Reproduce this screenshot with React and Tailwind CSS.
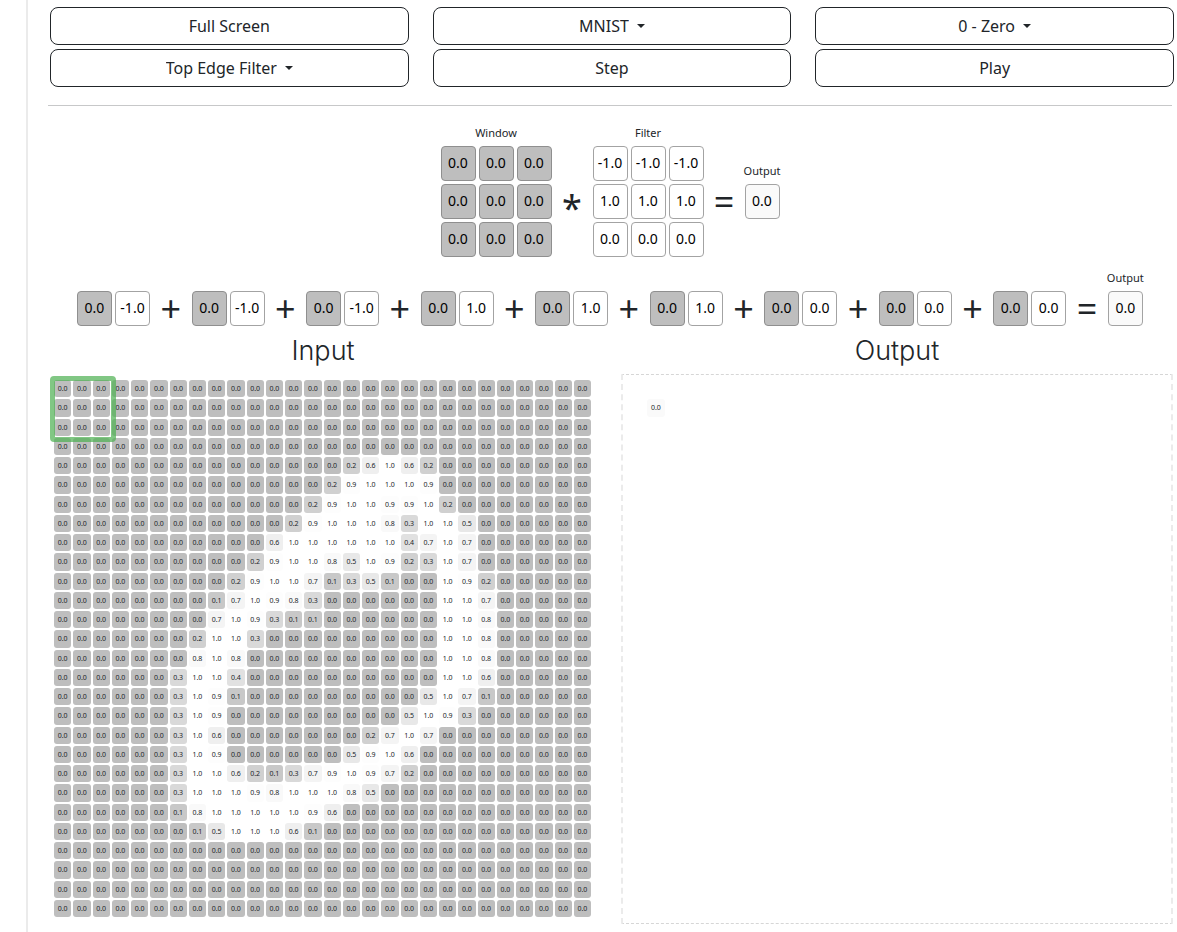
import { useState } from "react";

const SIZE = 28;

// one entry per image row: [first column, pixel values in tenths, X = 1.0]
const ZERO_DIGIT = [
    [0, ""],
    [0, ""],
    [0, ""],
    [0, ""],
    [15, "26X62"],
    [14, "29XXX9"],
    [13, "29XX99X2"],
    [12, "29XXX83XX5"],
    [11, "6XXXXXX47X7"],
    [10, "29XX85X923X7"],
    [9, "29XX7135100X92"],
    [8, "17X983000000XX7"],
    [8, "7X9311000000XX8"],
    [7, "2XX3000000000XX8"],
    [7, "8X80000000000XX8"],
    [6, "3XX40000000000XX6"],
    [6, "3X910000000005X71"],
    [6, "3X90000000005X93"],
    [6, "3X6000000027X7"],
    [6, "3X900000059X6"],
    [6, "3XX621379X972"],
    [6, "3XXX98XXX85"],
    [6, "18XXXXX96"],
    [7, "15XXX61"],
    [0, ""],
    [0, ""],
    [0, ""],
    [0, ""],
];

const pixels = ZERO_DIGIT.flatMap(([start, values]) =>
    ("0".repeat(start) + values)
        .padEnd(SIZE, "0")
        .split("")
        .map((c) => (c === "X" ? 1 : Number(c) / 10))
);

const windowValues = [0, 0, 0, 0, 0, 0, 0, 0, 0];
const filterValues = [-1, -1, -1, 1, 1, 1, 0, 0, 0];

function shade(value){
    const level = Math.round(255 - 65 * Math.pow(1 - value, 1.5));
    return `rgb(${level}, ${level}, ${level})`;
}

function Dropdown({ label, options }){
    const [value, setValue] = useState(options[0]);

    return(
        <label className="h-[38px] flex justify-center items-center gap-2 border border-[#212529] rounded-lg cursor-pointer hover:bg-gray-100">
            <select aria-label={label} value={value} onChange={
                (e)=>{
                    setValue(e.target.value)
                }
            } className="appearance-none field-sizing-content outline-none cursor-pointer">
                {options.map((option) => (
                    <option key={option}>{option}</option>
                ))}
            </select>
            <span className="border-x-4 border-t-4 border-x-transparent border-t-[#212529]"></span>
        </label>
    )
}

function ActionButton({ children }){
    return(
        <button className="h-[38px] border border-[#212529] rounded-lg cursor-pointer hover:bg-gray-100">{children}</button>
    )
}

function Cell({ value, className }){
    return(
        <div className={"w-[35px] h-[35px] pb-[2px] flex justify-center items-center border rounded text-sm text-black " + className}>
            {value.toFixed(1)}
        </div>
    )
}

function Labelled({ label, children }){
    return(
        <div className="flex flex-col items-center">
            <div className="text-[11px] leading-4 mb-[5px]">{label}</div>
            {children}
        </div>
    )
}

function OutputCell(){
    return(
        <div className="w-[35px] flex justify-center">
            <Labelled label="Output">
                <Cell value={0} className="bg-[#fafafa] border-[#a3a3a3]" />
            </Labelled>
        </div>
    )
}

function Operator({ children }){
    return(
        <div className="w-[21px] h-[35px] text-4xl leading-[35px] text-center">{children}</div>
    )
}

function Pixel({ value, color, className }){
    return(
        <div style={{ backgroundColor: color }} className={"min-w-0 min-h-0 flex justify-center items-center rounded-[3px] text-[7px] leading-none text-[#212529] " + (className || "")}>
            {value.toFixed(1)}
        </div>
    )
}

export default function App(){
    return(
        <div className="min-h-screen bg-white pl-[26px] flex font-['Noto_Sans',sans-serif] text-[#212529]">
            <main className="flex-1 min-w-0 border-l-2 border-[#ebebeb] pl-5 pr-[5px] pt-[7px] pb-1">

                <div className="grid grid-cols-3 gap-x-6 gap-y-1 ml-[2px] -mr-[2px]">
                    <ActionButton>Full Screen</ActionButton>
                    <Dropdown label="Dataset" options={["MNIST", "Fashion MNIST"]} />
                    <Dropdown label="Image" options={["0 - Zero", "1 - One", "2 - Two", "3 - Three"]} />
                    <Dropdown label="Filter" options={["Top Edge Filter", "Bottom Edge Filter", "Left Edge Filter", "Right Edge Filter"]} />
                    <ActionButton>Step</ActionButton>
                    <ActionButton>Play</ActionButton>
                </div>

                <hr className="mt-[18px] border-[#c7c8c9]" />

                <div className="mt-[19px] flex justify-center items-center gap-[10px]">
                    <Labelled label="Window">
                        <div className="grid grid-cols-3 gap-[3px]">
                            {windowValues.map((v, i) => (
                                <Cell key={i} value={v} className="bg-[#bebebe] border-[#8f8f8f]" />
                            ))}
                        </div>
                    </Labelled>
                    {/* the glyph sits high on its line, so it gets more room above */}
                    <div className="pt-8"><Operator>*</Operator></div>
                    <Labelled label="Filter">
                        <div className="grid grid-cols-3 gap-[3px]">
                            {filterValues.map((v, i) => (
                                <Cell key={i} value={v} className="bg-white border-[#a3a3a3]" />
                            ))}
                        </div>
                    </Labelled>
                    <div className="pt-[21px]"><Operator>=</Operator></div>
                    <OutputCell />
                </div>

                <div className="mt-[13px] px-[29px] flex justify-between items-end">
                    {windowValues.map((v, i) => [
                        <div key={"pair" + i} className="flex gap-[3px]">
                            <Cell value={v} className="bg-[#bebebe] border-[#8f8f8f]" />
                            <Cell value={filterValues[i]} className="bg-white border-[#a3a3a3]" />
                        </div>,
                        <Operator key={"op" + i}>{i < 8 ? "+" : "="}</Operator>
                    ])}
                    <OutputCell />
                </div>

                <div className="mt-[10px] grid grid-cols-2 gap-6">
                    <section>
                        <h2 className="mb-2 text-center font-['Inter',sans-serif] font-light text-[27px] leading-[30px]">Input</h2>
                        <div className="relative pl-[6px] pt-[6px] pr-[7px] pb-[7px]">
                            <div className="aspect-square grid grid-cols-[repeat(28,minmax(0,1fr))] grid-rows-[repeat(28,minmax(0,1fr))] gap-[2px]">
                                {pixels.map((v, i) => (
                                    <Pixel key={i} value={v} color={shade(v)} />
                                ))}
                            </div>
                            {/* current position of the sliding window */}
                            <div className="absolute left-[2px] top-[2px] w-[12%] h-[12%] border-5 border-[#4caf50]/70 rounded"></div>
                        </div>
                    </section>

                    <section>
                        <h2 className="mb-2 text-center font-['Inter',sans-serif] font-light text-[27px] leading-[30px]">Output</h2>
                        <div className="-mx-px px-[5px] py-[5px] border-x-2 border-y border-dashed border-x-[#ebebeb] border-y-[#d6d6d6]">
                            <div className="aspect-square grid grid-cols-[repeat(28,minmax(0,1fr))] grid-rows-[repeat(28,minmax(0,1fr))] gap-[2px]">
                                <Pixel value={0} color="#fafafa" className="col-start-2 row-start-2" />
                            </div>
                        </div>
                    </section>
                </div>

            </main>
        </div>
    )
}
